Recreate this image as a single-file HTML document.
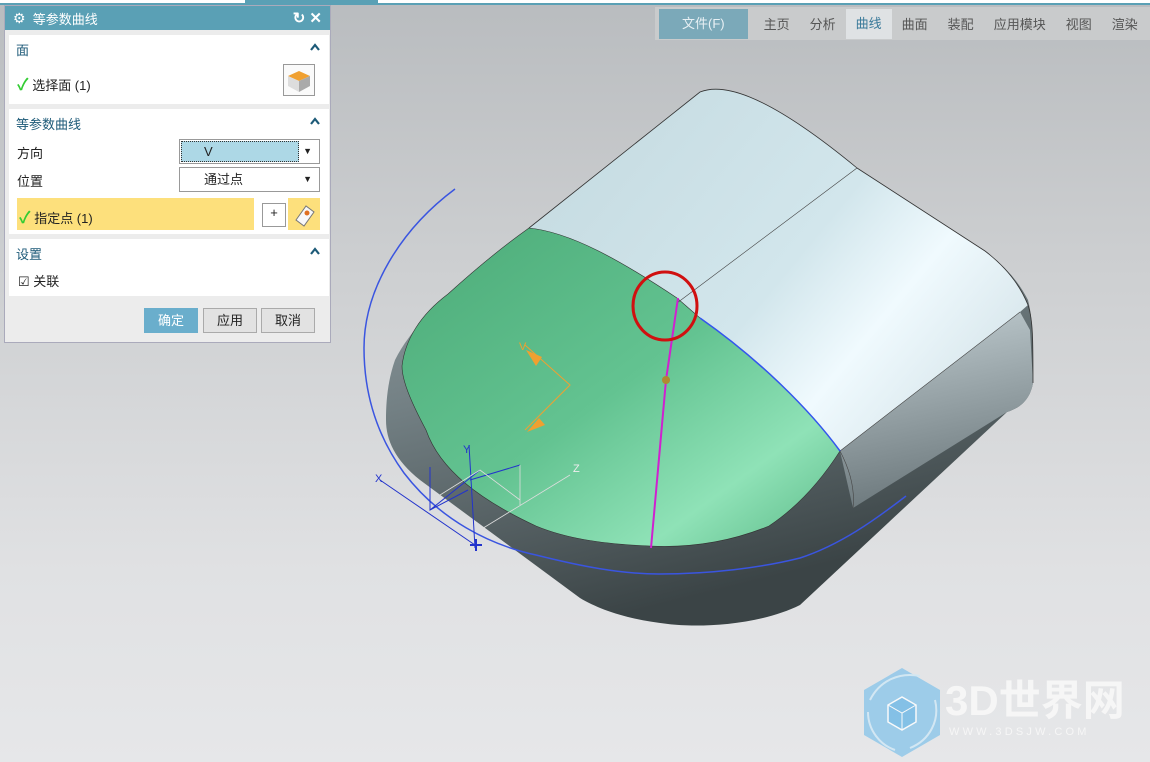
<!DOCTYPE html>
<html><head><meta charset="utf-8"><style>
*{margin:0;padding:0;box-sizing:border-box}
body{width:1150px;height:762px;overflow:hidden;position:relative;font-family:"Liberation Sans","Noto Sans CJK SC",sans-serif;font-size:13px;color:#222;background:linear-gradient(#b9bcbf 0%,#cdcfd1 35%,#e0e1e3 75%,#e6e7e9 100%)}
.abs{position:absolute}
#menu{left:655px;top:7px;width:495px;height:33px;background:#c9cbcc;display:flex;align-items:center;font-size:13px;color:#555}
#menu span{padding:0 10px}
#panel{left:4px;top:5px;width:327px;height:338px;background:#ececec;border:1px solid #aab}
.title{height:24px;background:#5aa0b5;color:#fff;display:flex;align-items:center;padding-left:8px;font-size:13px}
.sec{position:absolute;left:4px;width:320px;background:#fff}
.hdr{color:#1d5a78;font-size:13px}
.chev{position:absolute;right:8px;width:12px;height:12px}
.chk{color:#3c3;font-size:16px;font-weight:bold}
.btn{position:absolute;top:302px;height:25px;width:54px;background:#e2e2e2;border:1px solid #aaa;text-align:center;line-height:23px;font-size:13px}
</style></head><body>
<div class="abs" style="left:0;top:0;width:1150px;height:3px;background:#fff"></div>
<div class="abs" style="left:245px;top:0;width:133px;height:3px;background:#5aa0b5"></div>
<div class="abs" style="left:0;top:3px;width:1150px;height:2px;background:#5aa0b5"></div>
<div class="abs" id="menu"><span style="background:#7ba9b9;color:#e8f0f4;padding:0 23px;height:30px;line-height:30px;margin-left:4px">文件(F)</span><span style="margin-left:6px">主页</span><span>分析</span><span style="background:#dfe2e4;color:#3a7a9a;height:30px;line-height:30px">曲线</span><span>曲面</span><span>装配</span><span>应用模块</span><span>视图</span><span>渲染</span></div>

<svg class="abs" style="left:0;top:0" width="1150" height="762">
<defs>
<linearGradient id="gr" x1="0" y1="0" x2="0.3" y2="1"><stop offset="0" stop-color="#aab6ba"/><stop offset="0.55" stop-color="#738084"/><stop offset="1" stop-color="#3b4446"/></linearGradient>
<linearGradient id="gr2" x1="0" y1="0" x2="0.2" y2="1"><stop offset="0" stop-color="#c4d0d4"/><stop offset="1" stop-color="#6d797d"/></linearGradient>
<linearGradient id="lb" x1="0" y1="0" x2="1" y2="0.6"><stop offset="0" stop-color="#c3d9df"/><stop offset="0.6" stop-color="#d2e6ec"/><stop offset="0.8" stop-color="#f0fafe"/><stop offset="1" stop-color="#dbe9ee"/></linearGradient>
<linearGradient id="gn" x1="0" y1="0" x2="1" y2="1"><stop offset="0" stop-color="#4cab78"/><stop offset="0.5" stop-color="#63c391"/><stop offset="0.78" stop-color="#8fe2b7"/><stop offset="1" stop-color="#5cba88"/></linearGradient>
</defs>
<path d="M700,92 C720,84 760,88 857,168 L985,251 C1010,270 1020,285 1028,300 C1033,320 1033,340 1033,383 C1030,400 1020,408 1007,412 L800,605 C760,625 700,628 668,624 C630,620 600,610 580,598 L420,480 C395,460 386,440 386,420 C386,400 388,380 395,360 C410,330 440,300 470,275 L529,228 Z" fill="url(#gr)"/>
<path d="M1020,312 L1030,330 L1033,383 C1030,400 1020,408 1007,412 L853,508 L840,451 Z" fill="url(#gr2)"/>
<path d="M529,228 L700,92 C720,84 760,88 857,168 L985,251 C1010,270 1022,290 1028,305 L1020,312 L840,451 C810,410 760,360 700,318 L677,298 C620,260 570,232 529,228 Z" fill="url(#lb)"/>
<path d="M529,228 C570,232 620,260 677,298 L700,318 C760,360 810,410 840,451 C815,490 790,512 769,526 C730,542 690,548 650,546 C600,544 565,538 536,526 C480,500 440,470 426,430 C410,400 402,380 402,366 C405,340 420,315 448,294 C480,265 505,245 529,228 Z" fill="url(#gn)" stroke="#333" stroke-width="0.6"/>
<path d="M677,303 L857,168 M840,451 L1020,312 M840,451 C850,470 855,490 853,508" stroke="#444" stroke-width="0.6" fill="none"/>
<path d="M529,228 L700,92 C720,84 760,88 857,168 L985,251 C1010,270 1022,290 1028,305 C1033,320 1033,340 1033,383" stroke="#333" stroke-width="0.8" fill="none"/>
<path d="M700,318 C760,360 810,410 840,451" stroke="#3355ee" stroke-width="1.5" fill="none"/>
<path d="M455,189 C400,230 364,290 364,348 C364,400 380,440 404,473 C440,520 490,545 536,555 C580,566 620,574 659,574 C710,574 760,568 800,558 C840,545 875,520 906,496" stroke="#3a55e0" stroke-width="1.5" fill="none"/>
<path d="M678,298 L666,380 L651,548" stroke="#d020d0" stroke-width="2" fill="none"/>
<circle cx="666" cy="380" r="4" fill="#b08a30"/>
<ellipse cx="665" cy="306" rx="32" ry="34" fill="none" stroke="#d01010" stroke-width="3"/>
<path d="M525,345 L570,385 L525,430" stroke="#f0a030" stroke-width="1" fill="none"/>
<path d="M526,350 l16,7 l-6,9 z M527,432 l12,-14 l6,7 z" fill="#f0a030"/>
<text x="519" y="350" fill="#f0a030" font-size="11">V</text>
<path d="M380,480 L475,545 M469,445 L475,548 M430,467 L430,510 L480,470 M470,480 L520,465 M430,510 L468,490" stroke="#2233cc" stroke-width="1" fill="none"/>
<path d="M470,545 h12 M476,539 v12" stroke="#2233cc" stroke-width="2"/>
<path d="M440,495 L480,470 L520,500 M520,465 L520,505 M480,530 L570,475" stroke="#ddd" stroke-width="0.8" fill="none"/>
<text x="375" y="482" fill="#2233cc" font-size="11">X</text><text x="463" y="453" fill="#2233cc" font-size="11">Y</text><text x="573" y="472" fill="#eee" font-size="11">Z</text>
<g opacity="0.8"><path d="M902,668 L940,690 L940,735 L902,757 L864,735 L864,690 Z" fill="#8cc6ea"/><path d="M870,700 C880,680 900,672 920,676 M935,700 C940,720 930,740 910,748 M895,750 C880,745 868,730 868,712" stroke="#cfe8f6" stroke-width="2" fill="none"/><path d="M888,705 L902,697 L916,705 L916,722 L902,730 L888,722 Z" fill="#6db8e6" stroke="#fff" stroke-width="1.5"/><path d="M888,705 L902,713 L916,705 M902,713 V730" stroke="#fff" stroke-width="1" fill="none"/></g>
<text x="945" y="715" fill="#f6f6f6" font-size="42" font-weight="bold">3D世界网</text>
<text x="949" y="735" fill="#f6f6f6" font-size="11" letter-spacing="3.2">WWW.3DSJW.COM</text>
</svg>

<div class="abs" id="panel">
<div class="title"><span style="font-size:14px">⚙</span>&nbsp; 等参数曲线<span style="margin-left:auto;margin-right:8px;font-size:15px;font-weight:bold">↻ ✕</span></div>
<div class="sec" style="top:29px;height:69px"><div class="hdr" style="position:absolute;left:7px;top:5px">面</div><svg class="chev" style="top:6px"><path d="M2,9 L6,4 L10,9" stroke="#1d5a78" stroke-width="2.2" fill="none"/></svg>
<div style="position:absolute;left:8px;top:36px"><span class="chk">✓</span> 选择面 (1)</div>
<div style="position:absolute;left:274px;top:29px;width:32px;height:32px;border:1px solid #999;background:#fafafa"><svg width="30" height="30"><path d="M4,11 L15,6 L26,11 L15,16 Z" fill="#f0a030"/><path d="M4,11 L15,16 L15,27 L4,21 Z" fill="#ddd"/><path d="M26,11 L15,16 L15,27 L26,21 Z" fill="#aaa"/></svg></div></div>
<div class="sec" style="top:103px;height:125px"><div class="hdr" style="position:absolute;left:7px;top:5px">等参数曲线</div><svg class="chev" style="top:6px"><path d="M2,9 L6,4 L10,9" stroke="#1d5a78" stroke-width="2.2" fill="none"/></svg>
<div style="position:absolute;left:8px;top:34px">方向</div>
<div style="position:absolute;left:170px;top:30px;width:141px;height:25px;border:1px solid #999;background:#fff"><div style="position:absolute;left:1px;top:1px;width:118px;height:21px;background:#add8e6;border:1px dotted #333;padding-left:22px;line-height:19px">V</div><span style="position:absolute;right:7px;top:6px;font-size:9px">▼</span></div>
<div style="position:absolute;left:8px;top:62px">位置</div>
<div style="position:absolute;left:170px;top:58px;width:141px;height:25px;border:1px solid #999;background:#fff;padding-left:24px;line-height:23px">通过点<span style="position:absolute;right:7px;top:0;font-size:9px">▼</span></div>
<div style="position:absolute;left:8px;top:89px;width:237px;height:32px;background:#fde07c;padding:6px 0 0 2px"><span class="chk">✓</span> 指定点 (1)</div>
<div style="position:absolute;left:253px;top:94px;width:24px;height:24px;border:1px solid #999;background:#fff;text-align:center;font-size:13px;line-height:18px">+</div>
<div style="position:absolute;left:279px;top:89px;width:32px;height:32px;background:#fde07c"><svg width="32" height="32"><path d="M8,22 L18,8 L26,14 L16,28 Z" fill="#f8f8f8" stroke="#777"/><circle cx="19" cy="15" r="2.5" fill="#e07020"/></svg></div></div>
<div class="sec" style="top:233px;height:57px"><div class="hdr" style="position:absolute;left:7px;top:5px">设置</div><svg class="chev" style="top:6px"><path d="M2,9 L6,4 L10,9" stroke="#1d5a78" stroke-width="2.2" fill="none"/></svg>
<div style="position:absolute;left:9px;top:32px">☑ 关联</div></div>
<div class="btn" style="left:139px;background:#6aaecc;color:#fff;border-color:#6aaecc">确定</div>
<div class="btn" style="left:198px">应用</div>
<div class="btn" style="left:256px">取消</div>
</div>
</body></html>
